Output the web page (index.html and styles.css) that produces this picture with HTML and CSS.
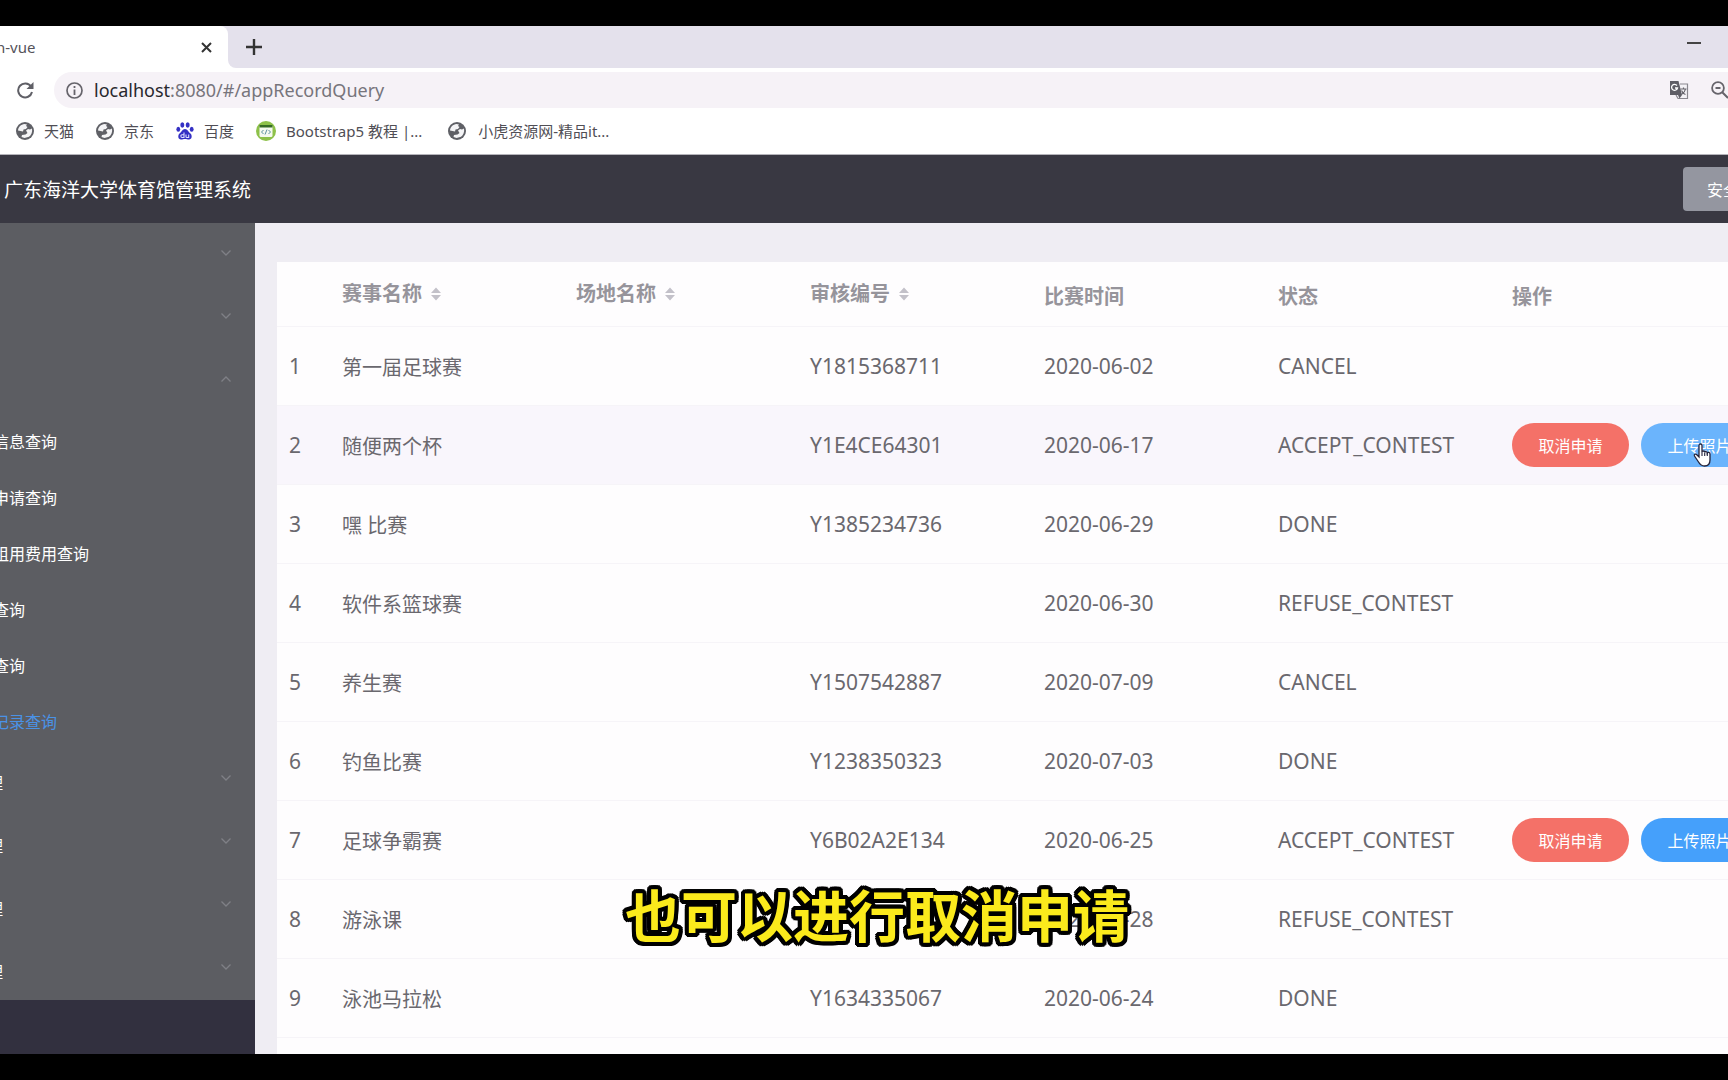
FILE: index.html
```html
<!DOCTYPE html>
<html lang="zh-CN">
<head>
<meta charset="utf-8">
<title>广东海洋大学体育馆管理系统</title>
<link rel="stylesheet" href="styles.css">
</head>
<body>
<svg class="defs" aria-hidden="true">
  <symbol id="globe" viewBox="0 0 18 18"><circle cx="9" cy="9" r="9" fill="#5f6066"/><path d="M2 8.500C2.300 5 5 2.300 8.500 2l2.500.5-1 1.500 1.500 1L10 7 7.500 7.500 7 9.500 4.500 9zM10 8.500l2-1.500 2 .5 2-1c.6 3.500-.5 6.500-3 8.300L8.500 16l-3-1 .5-2 3.500-.5 2-1.500z" fill="#f4f4f6"/></symbol>
  <symbol id="down" viewBox="0 0 12 8"><path d="M1.500 1.500L6 6l4.500-4.500" fill="none" stroke="currentColor" stroke-width="1.300"/></symbol>
  <symbol id="up" viewBox="0 0 12 8"><path d="M1.500 6.500L6 2l4.500 4.500" fill="none" stroke="currentColor" stroke-width="1.300"/></symbol>
  <symbol id="sort" viewBox="0 0 10 14"><path d="M0 6l5-5.500L10 6zM0 8h10l-5 5.500z" fill="#c3c1c9"/></symbol>
</svg>

<div class="browser">
  <div class="tabs">
    <div class="tab"><span class="tab-name">n-vue</span>
      <button class="icon-btn" aria-label="关闭标签页"><svg width="11" height="11" viewBox="0 0 11 11"><path d="M1 1l9 9M10 1l-9 9" stroke="#333" stroke-width="2"/></svg></button>
    </div>
    <div class="strip">
      <button class="icon-btn" aria-label="新标签页"><svg width="16" height="16" viewBox="0 0 16 16"><path d="M8 0v16M0 8h16" stroke="#333" stroke-width="2.400"/></svg></button>
      <button class="icon-btn minimize" aria-label="最小化"><svg width="14" height="2" viewBox="0 0 14 2"><path d="M0 1h14" stroke="#444" stroke-width="2"/></svg></button>
    </div>
  </div>
  <div class="toolbar">
    <button class="icon-btn" aria-label="刷新"><svg width="18" height="18" viewBox="0 0 18 18"><path d="M15 5.500A7 7 0 1 0 16 11" fill="none" stroke="#5f5f66" stroke-width="2"/><path d="M17.500 1v7h-7z" fill="#5f5f66"/></svg></button>
    <div class="address">
      <svg width="17" height="17" viewBox="0 0 17 17"><circle cx="8.500" cy="8.500" r="7.500" fill="none" stroke="#66646b" stroke-width="1.700"/><path d="M8.500 7.500V13M8.500 4v2" stroke="#66646b" stroke-width="1.800"/></svg>
      <div class="url"><span class="host">localhost</span>:8080/#/appRecordQuery</div>
      <svg width="20" height="20" viewBox="0 0 20 20"><path d="M11 4h7.500v14.500H9L7 15" fill="#f4f2f6" stroke="#8a888f" stroke-width="1.200"/><path d="M1 1h8.500l3.500 14H1z" fill="#5f5e66"/><path d="M8 5.500A3 3 0 1 0 8.500 8H6" fill="none" stroke="#fff" stroke-width="1.300"/><path d="M11.500 9h6M14.500 7.500V9M16.500 9c-.5 3-2.500 4.500-4 5.500M12.500 10.500c1 2 2.500 3.500 4 4" fill="none" stroke="#66646b" stroke-width="1.200"/><path d="M9 15h4l-2.500 3.500z" fill="#5f5e66"/></svg>
      <svg class="lens" width="18" height="18" viewBox="0 0 18 18"><circle cx="7" cy="7" r="5.900" fill="none" stroke="#66646b" stroke-width="1.800"/><path d="M4.500 7h5M11 11l6 6" stroke="#66646b" stroke-width="2"/></svg>
    </div>
  </div>
  <nav class="bookmarks" aria-label="书签">
    <a href="#"><svg width="18" height="18"><use href="#globe"/></svg>天猫</a>
    <a href="#"><svg width="18" height="18"><use href="#globe"/></svg>京东</a>
    <a href="#"><svg width="18" height="18" viewBox="0 0 18 18"><g fill="#3430c4"><ellipse cx="6.300" cy="3" rx="2" ry="2.700"/><ellipse cx="11.700" cy="3" rx="2" ry="2.700"/><ellipse cx="2.300" cy="7.300" rx="1.900" ry="2.500"/><ellipse cx="15.700" cy="7.300" rx="1.900" ry="2.500"/><path d="M9 7c2.500 0 3.500 3 5.500 4.500 2 2 1.500 6-1.500 6-1.500 0-2.500-.5-4-.5s-2.500.5-4 .5c-3 0-3.500-4-1.500-6C5.500 10 6.500 7 9 7z"/></g><path d="M8 10.500v5H6c-1.500 0-1.500-2.800 0-2.800h2M10 12.500v2.200c0 .8.500.8 1 .8h1.700v-3" fill="none" stroke="#dfe0ff" stroke-width="1.100"/></svg>百度</a>
    <a href="#"><svg width="20" height="20" viewBox="0 0 20 20"><circle cx="10" cy="10" r="10" fill="#8dc149"/><rect x="3.500" y="4" width="13" height="12" rx="1.500" fill="#f5faef"/><path d="M3.500 4h13v2.500h-13z" fill="#356b25"/><path d="M7.500 9l-2 2 2 2M12.500 9l2 2-2 2M11 8.500l-2 5" fill="none" stroke="#5d90a0"/></svg>Bootstrap5 教程 |...</a>
    <a href="#"><svg width="18" height="18"><use href="#globe"/></svg>小虎资源网-精品it...</a>
  </nav>
</div>

<header class="app-header">
  <h1>广东海洋大学体育馆管理系统</h1>
  <button class="logout">安全</button>
</header>

<div class="app">
  <aside class="sidebar">
    <ul class="menu">
      <li class="group"><svg><use href="#down"/></svg></li>
      <li class="group"><svg><use href="#down"/></svg></li>
      <li class="group"><svg><use href="#up"/></svg></li>
      <li class="item"><a href="#">信息查询</a></li>
      <li class="item"><a href="#">申请查询</a></li>
      <li class="item"><a href="#">租用费用查询</a></li>
      <li class="item"><a href="#">查询</a></li>
      <li class="item"><a href="#">查询</a></li>
      <li class="item"><a href="#" class="active">记录查询</a></li>
      <li class="group"><span>理</span><svg><use href="#down"/></svg></li>
      <li class="group"><span>理</span><svg><use href="#down"/></svg></li>
      <li class="group"><span>理</span><svg><use href="#down"/></svg></li>
      <li class="group"><span>理</span><svg><use href="#down"/></svg></li>
    </ul>
  </aside>
  <main class="content">
    <div class="card">
      <table>
        <colgroup><col class="col-index"><col><col><col><col><col><col></colgroup>
        <thead>
          <tr><th></th>
            <th class="sortable">赛事名称<svg class="sort"><use href="#sort"/></svg></th>
            <th class="sortable">场地名称<svg class="sort"><use href="#sort"/></svg></th>
            <th class="sortable">审核编号<svg class="sort"><use href="#sort"/></svg></th>
            <th>比赛时间</th><th>状态</th><th>操作</th></tr>
        </thead>
        <tbody>
          <tr><td>1</td><td class="name">第一届足球赛</td><td></td><td>Y1815368711</td><td>2020-06-02</td><td>CANCEL</td><td></td></tr>
          <tr class="hover"><td>2</td><td class="name">随便两个杯</td><td></td><td>Y1E4CE64301</td><td>2020-06-17</td><td>ACCEPT_CONTEST</td>
            <td><div class="actions"><button class="btn danger">取消申请</button><button class="btn primary lit">上传照片<svg class="pointer" viewBox="0 0 19 24"><path d="M6 2.500c0-2 3-2 3 0V9c0-1.500 2.600-1.300 2.700.3.300-1.200 2.500-1 2.600.6.500-1 2.700-.7 2.700 1V17c0 4-2 6-5.500 6C8 23 7 21.500 5.500 19L1.500 13c-.8-1.600 1-2.600 2.300-1.300L6 14z" fill="#fff" stroke="#24243c" stroke-width="1.300"/><path d="M9 9v4M11.700 9.500V13M14.300 10v3" stroke="#24243c" stroke-width="1.100"/></svg></button></div></td></tr>
          <tr><td>3</td><td class="name">嘿 比赛</td><td></td><td>Y1385234736</td><td>2020-06-29</td><td>DONE</td><td></td></tr>
          <tr><td>4</td><td class="name">软件系篮球赛</td><td></td><td></td><td>2020-06-30</td><td>REFUSE_CONTEST</td><td></td></tr>
          <tr><td>5</td><td class="name">养生赛</td><td></td><td>Y1507542887</td><td>2020-07-09</td><td>CANCEL</td><td></td></tr>
          <tr><td>6</td><td class="name">钓鱼比赛</td><td></td><td>Y1238350323</td><td>2020-07-03</td><td>DONE</td><td></td></tr>
          <tr><td>7</td><td class="name">足球争霸赛</td><td></td><td>Y6B02A2E134</td><td>2020-06-25</td><td>ACCEPT_CONTEST</td>
            <td><div class="actions"><button class="btn danger">取消申请</button><button class="btn primary">上传照片</button></div></td></tr>
          <tr><td>8</td><td class="name">游泳课</td><td></td><td></td><td>2020-06-28</td><td>REFUSE_CONTEST</td><td></td></tr>
          <tr><td>9</td><td class="name">泳池马拉松</td><td></td><td>Y1634335067</td><td>2020-06-24</td><td>DONE</td><td></td></tr>
        </tbody>
      </table>
    </div>
  </main>
</div>
<p class="caption">也可以进行取消申请</p>
</body>
</html>
```

FILE: styles.css
```css
* { box-sizing: border-box; }

body {
  margin: 0;
  min-height: 100vh;
  padding: 26px 0;
  display: flex;
  flex-direction: column;
  overflow-x: hidden;
  position: relative;
  background: #000;
  font-family: "Noto Sans", "Noto Sans CJK SC", sans-serif;
}

button { font-family: inherit; border: 0; cursor: pointer; }
a { color: inherit; text-decoration: none; }
.defs { position: absolute; width: 0; height: 0; }
.icon-btn { display: flex; padding: 0; background: none; }

/* Browser chrome */
.browser { background: #fff; border-bottom: 1px solid #b5b4ba; }

.tabs { display: flex; height: 42px; background: linear-gradient(#e4e1ec 50%, #fff 50%); }
.tab {
  display: flex;
  align-items: center;
  justify-content: space-between;
  width: 228px;
  padding-right: 16px;
  background: #fff;
  border-top-right-radius: 8px;
}
.tab-name { margin-left: -4px; font-size: 15px; color: #55535a; }
.strip {
  flex: 1;
  display: flex;
  align-items: center;
  padding-left: 18px;
  background: #e4e1ec;
  border-bottom-left-radius: 8px;
}
.minimize { margin: 0 27px 8px auto; }

.toolbar { display: flex; align-items: center; gap: 20px; height: 44px; padding-left: 16px; }
.address {
  flex: 1;
  display: flex;
  align-items: center;
  height: 36px;
  padding-left: 12px;
  background: #f6f2f7;
  border-radius: 18px 0 0 18px;
}
.url { flex: 1; margin-left: 11px; font-size: 18px; color: #77757c; }
.host { color: #29282d; }
.lens { margin-left: 22px; margin-right: -1px; }

.bookmarks {
  display: flex;
  align-items: center;
  gap: 22px;
  height: 42px;
  padding-left: 16px;
  padding-bottom: 5px;
  font-size: 15px;
  color: #504e55;
}
.bookmarks a { display: flex; align-items: center; gap: 10px; white-space: nowrap; }
.bookmarks a:last-child { margin-left: 4px; gap: 12px; }

/* Application header */
.app-header {
  display: flex;
  align-items: center;
  justify-content: space-between;
  height: 68px;
  padding-left: 4px;
  overflow: hidden;
  background: #393842;
  color: #fff;
}
.app-header h1 { margin: 0; font-size: 19px; font-weight: 400; }
.logout {
  width: 80px;
  height: 44px;
  flex: none;
  margin-right: -35px;
  padding: 0 24px;
  border-radius: 4px 0 0 4px;
  background: #9496a0;
  color: #fff;
  font-size: 16px;
  text-align: left;
  white-space: nowrap;
}

.app { display: flex; flex: 1; }

/* Sidebar */
.sidebar { width: 255px; flex: none; overflow: hidden; background: #32303f; }
.menu { margin: 0; padding: 0; list-style: none; background: #5c5d62; color: #fff; font-size: 16px; }
.group { display: flex; align-items: center; height: 63px; }
.group span { margin-left: -13px; padding-top: 5px; }
.group svg { width: 12px; height: 8px; margin: 0 23px 3px auto; color: #7f8086; }
.item { display: flex; align-items: center; height: 56px; margin-left: -7px; padding-top: 2px; }
.active { color: #4a92e6; }

/* Table */
.content { flex: 1; min-width: 0; padding: 39px 0 0 22px; display: flex; background: #efedf3; }
.card { flex: 1; min-width: 0; overflow: hidden; background: #fefdfe; }
table {
  width: calc(100% + 6px);
  table-layout: fixed;
  border-collapse: separate;
  border-spacing: 0;
  color: #6a686e;
  font-size: 21px;
}
.col-index { width: 53px; }
th, td { padding: 0 12px; text-align: left; white-space: nowrap; border-bottom: 1px solid #f6f4f8; }
th { height: 65px; padding-top: 3px; color: #96949b; font-size: 20px; font-weight: 700; }
.sortable { padding-top: 0; padding-bottom: 3px; }
.sort { width: 10px; height: 14px; margin-left: 9px; }
td { height: 79px; }
.name { font-size: 20px; }
.hover td { background: #f9f6fc; }

.actions { display: flex; gap: 12px; }
.btn {
  position: relative;
  flex: none;
  width: 117px;
  height: 44px;
  padding: 0;
  border-radius: 22px;
  color: #fff;
  font-size: 16px;
}
.danger { background: #f47168; }
.primary { background: #45a0fb; }
.lit { background: #6bb4fc; }
.pointer { position: absolute; left: 52px; top: 20px; width: 19px; height: 24px; }

/* Video caption laid over the page, outlined by a ring of hard shadows */
.caption {
  position: absolute;
  left: 0;
  right: 0;
  bottom: 125px;
  margin: 0;
  padding-left: 26px;
  text-align: center;
  font-family: "Noto Sans CJK SC", sans-serif;
  font-size: 56px;
  line-height: 84px;
  font-weight: 700;
  color: #fbea1c;
  text-shadow:
    4px 0 #000, -4px 0 #000, 0 4px #000, 0 -4px #000,
    3px 3px #000, -3px 3px #000, 3px -3px #000, -3px -3px #000,
    4px 2px #000, -4px 2px #000, 4px -2px #000, -4px -2px #000,
    2px 4px #000, -2px 4px #000, 2px -4px #000, -2px -4px #000,
    2px 0 #000, -2px 0 #000, 0 2px #000, 0 -2px #000;
}
```
